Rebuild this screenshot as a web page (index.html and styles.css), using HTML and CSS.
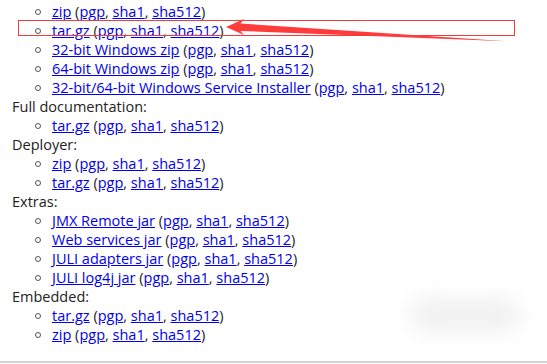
FILE: index.html
```html
<!DOCTYPE html>
<html>
<head>
<meta charset="utf-8">
<link rel="stylesheet" href="styles.css">
</head>
<body>
<div class="page">
  <ul class="files">
    <li><a href="#">zip</a> (<a href="#">pgp</a>, <a href="#">sha1</a>, <a href="#">sha512</a>)</li>
    <li><a href="#">tar.gz</a> (<a href="#">pgp</a>, <a href="#">sha1</a>, <a href="#">sha512</a>)</li>
    <li><a href="#">32-bit Windows zip</a> (<a href="#">pgp</a>, <a href="#">sha1</a>, <a href="#">sha512</a>)</li>
    <li><a href="#">64-bit Windows zip</a> (<a href="#">pgp</a>, <a href="#">sha1</a>, <a href="#">sha512</a>)</li>
    <li><a href="#">32-bit/64-bit Windows Service Installer</a> (<a href="#">pgp</a>, <a href="#">sha1</a>, <a href="#">sha512</a>)</li>
  </ul>
  <div class="group">Full documentation:</div>
  <ul class="files">
    <li><a href="#">tar.gz</a> (<a href="#">pgp</a>, <a href="#">sha1</a>, <a href="#">sha512</a>)</li>
  </ul>
  <div class="group">Deployer:</div>
  <ul class="files">
    <li><a href="#">zip</a> (<a href="#">pgp</a>, <a href="#">sha1</a>, <a href="#">sha512</a>)</li>
    <li><a href="#">tar.gz</a> (<a href="#">pgp</a>, <a href="#">sha1</a>, <a href="#">sha512</a>)</li>
  </ul>
  <div class="group">Extras:</div>
  <ul class="files">
    <li><a href="#">JMX Remote jar</a> (<a href="#">pgp</a>, <a href="#">sha1</a>, <a href="#">sha512</a>)</li>
    <li><a href="#">Web services jar</a> (<a href="#">pgp</a>, <a href="#">sha1</a>, <a href="#">sha512</a>)</li>
    <li><a href="#">JULI adapters jar</a> (<a href="#">pgp</a>, <a href="#">sha1</a>, <a href="#">sha512</a>)</li>
    <li><a href="#">JULI log4j jar</a> (<a href="#">pgp</a>, <a href="#">sha1</a>, <a href="#">sha512</a>)</li>
  </ul>
  <div class="group">Embedded:</div>
  <ul class="files">
    <li><a href="#">tar.gz</a> (<a href="#">pgp</a>, <a href="#">sha1</a>, <a href="#">sha512</a>)</li>
    <li><a href="#">zip</a> (<a href="#">pgp</a>, <a href="#">sha1</a>, <a href="#">sha512</a>)</li>
  </ul>
</div>
<div class="rule"></div>
<div class="highlight"></div>
<svg class="arrow" width="547" height="60" viewBox="0 0 547 60">
  <polygon points="226,27 244,19 240.5,23.5 507,41.3 240.5,31 244,35" fill="#ff3b3b"/>
</svg>
<div class="watermark"></div>
</body>
</html>
```
FILE: styles.css
```css
html, body {
  margin: 0;
  padding: 0;
  background: #fff;
  width: 547px;
  height: 364px;
  overflow: hidden;
  position: relative;
}
.page {
  padding: 2px 0 0 12px;
  height: 359px;
  font-family: "Open Sans", "DejaVu Sans", sans-serif;
  font-size: 14.5px;
  line-height: 19px;
  color: #222;
}
.group {
  color: #222;
}
.files {
  list-style: none;
  margin: 0;
  padding: 0 0 0 40px;
}
.files li {
  position: relative;
}
.files li::before {
  content: "";
  position: absolute;
  left: -17px;
  top: 7px;
  width: 4px;
  height: 4px;
  border: 1.3px solid #555;
  border-radius: 50%;
}
.files a {
  color: #0000ee;
  text-decoration: underline;
}
.rule {
  height: 2px;
  background: #d4d4d4;
}
.highlight {
  position: absolute;
  left: 18px;
  top: 20px;
  width: 495px;
  height: 14px;
  border: 1px solid #f03c3c;
}
.arrow {
  position: absolute;
  left: 0;
  top: 0;
}
.watermark {
  position: absolute;
  left: 410px;
  top: 298px;
  width: 110px;
  height: 34px;
  background: #f1f1f1;
  filter: blur(10px);
  border-radius: 16px;
}
```
